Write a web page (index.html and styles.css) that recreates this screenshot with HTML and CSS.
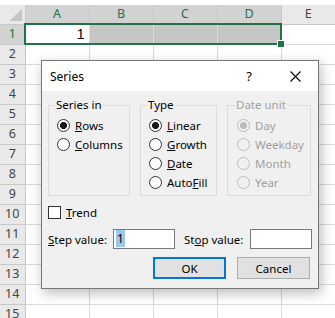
FILE: index.html
```html
<!DOCTYPE html>
<html>
<head>
<meta charset="utf-8">
<link rel="stylesheet" href="styles.css">
</head>
<body>
<div class="sheet">
  <table class="grid">
    <colgroup><col class="c-row"><col class="c-col"><col class="c-col"><col class="c-col"><col class="c-col"><col></colgroup>
    <tr class="head"><th class="corner"></th><th class="sel">A</th><th class="sel">B</th><th class="sel">C</th><th class="sel">D</th><th>E</th></tr>
    <tr><th class="sel">1</th><td class="num">1</td><td class="hl"></td><td class="hl"></td><td class="hl"></td><td></td></tr>
    <tr><th>2</th><td></td><td></td><td></td><td></td><td></td></tr>
    <tr><th>3</th><td></td><td></td><td></td><td></td><td></td></tr>
    <tr><th>4</th><td></td><td></td><td></td><td></td><td></td></tr>
    <tr><th>5</th><td></td><td></td><td></td><td></td><td></td></tr>
    <tr><th>6</th><td></td><td></td><td></td><td></td><td></td></tr>
    <tr><th>7</th><td></td><td></td><td></td><td></td><td></td></tr>
    <tr><th>8</th><td></td><td></td><td></td><td></td><td></td></tr>
    <tr><th>9</th><td></td><td></td><td></td><td></td><td></td></tr>
    <tr><th>10</th><td></td><td></td><td></td><td></td><td></td></tr>
    <tr><th>11</th><td></td><td></td><td></td><td></td><td></td></tr>
    <tr><th>12</th><td></td><td></td><td></td><td></td><td></td></tr>
    <tr><th>13</th><td></td><td></td><td></td><td></td><td></td></tr>
    <tr><th>14</th><td></td><td></td><td></td><td></td><td></td></tr>
    <tr><th>15</th><td></td><td></td><td></td><td></td><td></td></tr>
  </table>
  <div class="selection"><span class="handle"></span></div>
</div>

<div class="dialog">
  <div class="titlebar">
    <span class="title">Series</span>
    <span class="help">?</span>
    <svg class="close" width="11" height="11" viewBox="0 0 11 11"><path d="M0.5 0.5L10.5 10.5M10.5 0.5L0.5 10.5" stroke="#000" stroke-width="1.1" fill="none"/></svg>
  </div>
  <div class="body">
    <div class="groups">
      <fieldset class="grp g-series">
        <legend>Series in</legend>
        <div class="opt"><span class="radio on"></span><span><u>R</u>ows</span></div>
        <div class="opt"><span class="radio"></span><span><u>C</u>olumns</span></div>
      </fieldset>
      <fieldset class="grp g-type">
        <legend>Type</legend>
        <div class="opt"><span class="radio on"></span><span><u>L</u>inear</span></div>
        <div class="opt"><span class="radio"></span><span><u>G</u>rowth</span></div>
        <div class="opt"><span class="radio"></span><span><u>D</u>ate</span></div>
        <div class="opt"><span class="radio"></span><span>Auto<u>F</u>ill</span></div>
      </fieldset>
      <fieldset class="grp g-date off">
        <legend>Date unit</legend>
        <div class="opt"><span class="radio on"></span><span>Day</span></div>
        <div class="opt"><span class="radio"></span><span>Weekday</span></div>
        <div class="opt"><span class="radio"></span><span>Month</span></div>
        <div class="opt"><span class="radio"></span><span>Year</span></div>
      </fieldset>
    </div>

    <div class="trend"><span class="check"></span><span><u>T</u>rend</span></div>

    <div class="values">
      <span class="lbl"><u>S</u>tep value:</span>
      <span class="field"><span class="picked">1</span></span>
      <span class="lbl lbl-stop">St<u>o</u>p value:</span>
      <span class="field"></span>
    </div>

    <div class="buttons">
      <span class="btn btn-default">OK</span>
      <span class="btn">Cancel</span>
    </div>
  </div>
</div>
</body>
</html>
```

FILE: styles.css
```css
body {
	margin:0;
	width:335px;
	height:318px;
	overflow:hidden;
	position:relative;
	background:#fff;
	font-family:"Noto Sans", "DejaVu Sans", sans-serif;
}

/* worksheet */
.sheet {
	padding-top:5px;
	position:relative;
}
.grid {
	border-collapse:collapse;
	border-style:hidden;
	table-layout:fixed;
	width:335px;
}
.c-row { width:25px; }
.c-col { width:64px; }
.grid tr { height:20px; }
.grid tr.head { height:19px; }
.grid td, .grid th {
	padding:0;
	border:1px solid #dadada;
}
.grid th {
	background:#e9e9e9;
	border-color:#c9c9c9;
	color:#444;
	font-weight:normal;
	font-size:12.5px;
	text-align:center;
	line-height:14px;
}
.grid th.sel {
	background:#d2d2d2;
	color:#217346;
}
.grid th.corner {
	background:#e9e9e9 linear-gradient(135deg, transparent 50%, #c6c6c6 50%) no-repeat right 3px bottom 3px / 12px 12px;
}
.grid td.hl { background:#c6c6c6; }
.grid td.num {
	text-align:right;
	padding-right:4px;
	font-family:"Liberation Sans", sans-serif;
	font-size:14px;
	color:#000;
}
.selection {
	position:absolute;
	left:24px;
	top:23px;
	width:258px;
	height:22px;
	box-sizing:border-box;
	border:2px solid #217346;
}
.handle {
	position:absolute;
	right:-5px;
	bottom:-5px;
	width:6px;
	height:6px;
	background:#217346;
	border:1px solid #fff;
}

/* dialog */
.dialog {
	position:absolute;
	left:41px;
	top:60px;
	width:278px;
	height:229px;
	box-sizing:border-box;
	border:1px solid #767676;
	background:#f0f0f0;
	box-shadow:2px 4px 12px rgba(0, 0, 0, .28);
	font-size:11.5px;
	color:#000;
}
.titlebar {
	height:30px;
	background:#fff;
	display:flex;
	align-items:center;
	padding-left:8px;
}
.title {
	flex:1;
	font-size:12px;
}
.help {
	font-size:13px;
	margin-right:38px;
}
.close {
	margin-right:17px;
}
.body {
	padding:6px 6px 0 6px;
}
.groups {
	display:flex;
	gap:10px;
}
.grp {
	margin:0;
	padding:0 0 3px 8px;
	border:1px solid #dcdcdc;
	box-sizing:border-box;
	min-width:0;
}
.g-series { width:82px; }
.g-type { width:77px; }
.g-date { width:84px; padding-left:9px; }
.grp legend {
	padding:0 1px;
	margin-left:-2px;
	line-height:16px;
}
.grp .opt:first-of-type { margin-top:3px; }
.opt {
	display:flex;
	align-items:center;
	gap:5px;
	height:19px;
}
.radio {
	width:13px;
	height:13px;
	box-sizing:border-box;
	border:1px solid #333;
	border-radius:50%;
	background:#fff;
	flex:none;
}
.radio.on {
	background:radial-gradient(circle, #1a1a1a 0 3.2px, #fff 3.8px);
}
.off legend, .off .opt { color:#a0a0a0; }
.off .radio {
	border-color:#bcbcbc;
	background:#f0f0f0;
}
.off .radio.on {
	background:radial-gradient(circle, #bcbcbc 0 3.2px, #f0f0f0 3.8px);
}
.trend {
	display:flex;
	align-items:center;
	gap:5px;
	height:19px;
	margin-top:7px;
}
.check {
	width:13px;
	height:13px;
	box-sizing:border-box;
	border:1px solid #333;
	background:#fff;
}
.values {
	display:flex;
	align-items:center;
	height:20px;
	margin-top:7px;
}
.lbl { width:65px; }
.lbl-stop { width:66px; margin-left:9px; }
.field {
	width:62px;
	height:20px;
	box-sizing:border-box;
	border:1px solid #7a7a7a;
	background:#fff;
	padding:1px 2px;
	line-height:16px;
	font-size:12px;
}
.picked {
	background:#99c9ef;
	padding:0 1px;
}
.buttons {
	display:flex;
	justify-content:flex-end;
	gap:11px;
	margin-top:8px;
	padding-right:2px;
}
.btn {
	width:73px;
	height:22px;
	box-sizing:border-box;
	border:1px solid #adadad;
	background:#e1e1e1;
	display:flex;
	align-items:center;
	justify-content:center;
}
.btn-default {
	border:2px solid #0078d7;
}
```
